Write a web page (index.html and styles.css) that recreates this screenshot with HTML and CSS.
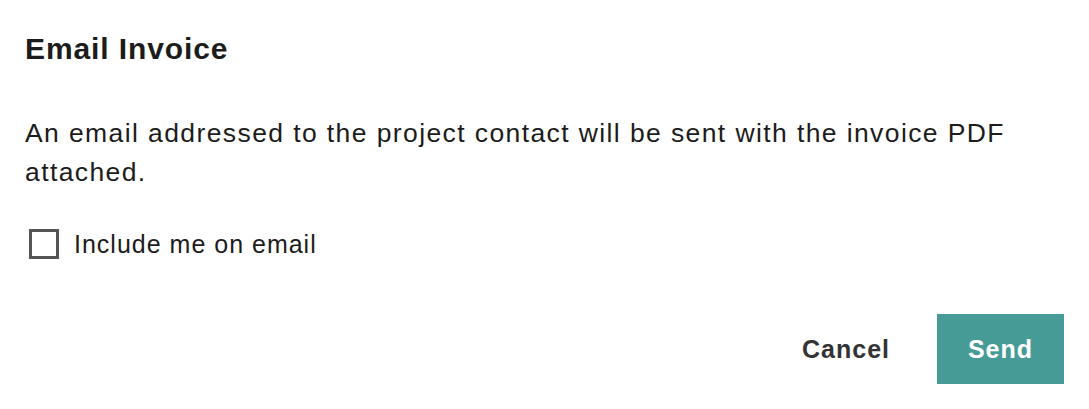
FILE: index.html
```html
<!DOCTYPE html>
<html lang="en">
<head>
  <meta charset="UTF-8" />
  <meta name="viewport" content="width=device-width, initial-scale=1.0" />
  <title>Email Invoice</title>
  <link rel="stylesheet" href="styles.css">
</head>
<body>
  <main class="dialog" role="dialog" aria-labelledby="dialog-title">
    <h1 id="dialog-title" class="dialog-title">Email Invoice</h1>

    <p class="dialog-text">An email addressed to the project contact will be sent with the invoice PDF attached.</p>

    <label class="check-row">
      <input class="check-box" type="checkbox" />
      <span class="check-label">Include me on email</span>
    </label>

    <footer class="dialog-actions">
      <button class="btn btn-cancel" type="button">Cancel</button>
      <button class="btn btn-send" type="button">Send</button>
    </footer>
  </main>
</body>
</html>
```

FILE: styles.css
```css
:root {
  --bg: #ffffff;
  --ink: #1c1c1c;
  --muted: #333333;
  --box: #555555;
  --teal: #469b97;
}

* { box-sizing: border-box; }

body {
  margin: 0;
  background: var(--bg);
  color: var(--ink);
  font-family: "Liberation Sans", Arial, Helvetica, sans-serif;
}

.dialog {
  padding: 30px 25px 0;
}

.dialog-title {
  margin: 0;
  font-size: 30px;
  line-height: 37px;
  font-weight: 700;
  letter-spacing: 0.9px;
}

.dialog-text {
  margin: 47px 0 0;
  font-size: 26.5px;
  line-height: 39px;
  letter-spacing: 1.4px;
}

.check-row {
  display: flex;
  align-items: center;
  gap: 15px;
  margin-top: 37px;
  padding-left: 4px;
  cursor: pointer;
}

.check-box {
  appearance: none;
  -webkit-appearance: none;
  width: 30px;
  height: 30px;
  margin: 0;
  border: 3px solid var(--box);
  background: var(--bg);
}

.check-label {
  font-size: 25px;
  line-height: 30px;
  letter-spacing: 1px;
}

/* actions pinned to the right edge */
.dialog-actions {
  display: flex;
  justify-content: flex-end;
  align-items: center;
  gap: 23px;
  margin-top: 55px;
}

.btn {
  height: 70px;
  border: 0;
  font-family: inherit;
  font-size: 25px;
  font-weight: 700;
  letter-spacing: 1px;
  cursor: pointer;
}

.btn-cancel {
  padding: 0 24px;
  background: transparent;
  color: var(--muted);
}

.btn-send {
  width: 127px;
  padding: 0;
  background: var(--teal);
  color: #ffffff;
}
```
